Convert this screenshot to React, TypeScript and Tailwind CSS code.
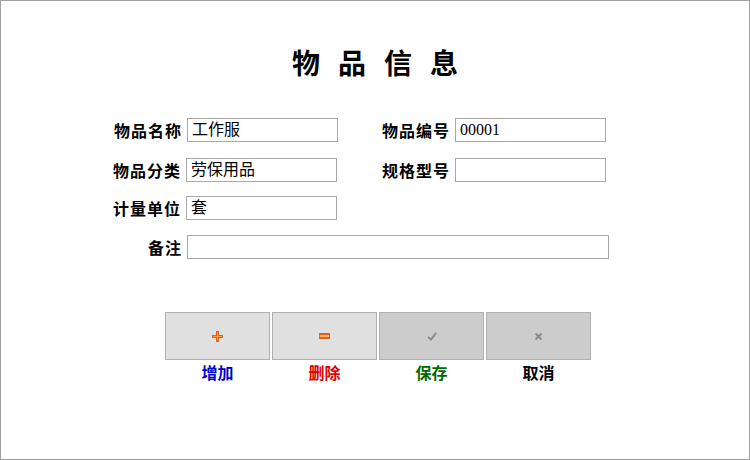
import React from "react";

const cjk = "font-['SimSun','Noto_Sans_CJK_SC',sans-serif]";

const Field = ({ label, value, labelWidth, inputWidth }: { label: string; value?: string; labelWidth: string; inputWidth: string }) => (
  <div className="flex items-center">
    <label className={`${labelWidth} text-right text-[16px] font-bold text-black pr-[5px] leading-none tracking-[1px]`}>{label}</label>
    <input
      readOnly
      value={value ?? ""}
      className={`${inputWidth} h-[24px] border border-[#a9a9a9] bg-white px-[4px] text-[16px] text-black outline-none font-['Liberation_Serif','Noto_Sans_CJK_SC',serif]`}
    />
  </div>
);

const PlusIcon = () => (
  <svg width="11" height="11" viewBox="0 0 11 11">
    <path d="M4 0h3v4h4v3H7v4H4V7H0V4h4z" fill="#e4611a" />
    <path d="M5 1h1v4h4v1H6v4H5V6H1V5h4z" fill="#f59a3c" />
  </svg>
);

const MinusIcon = () => (
  <svg width="11" height="6" viewBox="0 0 11 6">
    <rect x="0" y="0" width="11" height="6" fill="#e4611a" />
    <rect x="1" y="2" width="9" height="2" fill="#f7b66a" />
  </svg>
);

const CheckIcon = () => (
  <svg width="10" height="9" viewBox="0 0 10 9">
    <path d="M1 5l3 2.5L9 1" fill="none" stroke="#8a8a8a" strokeWidth="2" />
  </svg>
);

const CrossIcon = () => (
  <svg width="9" height="9" viewBox="0 0 9 9">
    <path d="M1.5 1.5l6 6M7.5 1.5l-6 6" fill="none" stroke="#8a8a8a" strokeWidth="2" />
  </svg>
);

const buttons = [
  { key: "add", label: "增加", color: "text-[#0000cc]", bg: "bg-[#e0e0e0]", icon: <PlusIcon /> },
  { key: "del", label: "删除", color: "text-[#e00000]", bg: "bg-[#e0e0e0]", icon: <MinusIcon /> },
  { key: "save", label: "保存", color: "text-[#006b00]", bg: "bg-[#cccccc]", icon: <CheckIcon /> },
  { key: "cancel", label: "取消", color: "text-black", bg: "bg-[#cccccc]", icon: <CrossIcon /> },
];

export default function App() {
  return (
    <div className={`w-[750px] h-[460px] bg-white border border-[#a0a0a0] ${cjk}`}>
      <h1 className="pt-[45px] text-center text-[28px] font-bold leading-[32px] text-black tracking-[18px] pl-[18px]">
        物品信息
      </h1>

      <div className="ml-[98px] mt-[40px] flex flex-col">
        <div className="flex">
          <Field label="物品名称" value="工作服" labelWidth="w-[88px]" inputWidth="w-[151px]" />
          <Field label="物品编号" value="00001" labelWidth="w-[117px]" inputWidth="w-[151px]" />
        </div>
        <div className="flex mt-[16px]">
          <Field label="物品分类" value="劳保用品" labelWidth="w-[87px]" inputWidth="w-[151px]" />
          <Field label="规格型号" labelWidth="w-[118px]" inputWidth="w-[151px]" />
        </div>
        <div className="flex mt-[14px]">
          <Field label="计量单位" value="套" labelWidth="w-[87px]" inputWidth="w-[151px]" />
        </div>
        <div className="flex mt-[15px]">
          <Field label="备注" labelWidth="w-[88px]" inputWidth="w-[422px]" />
        </div>
      </div>

      <div className="ml-[164px] mt-[53px] flex gap-[2px]">
        {buttons.map((b) => (
          <div key={b.key} className="flex flex-col items-center">
            <button className={`w-[105px] h-[48px] ${b.bg} border border-[#b0b0b0] flex items-center justify-center`}>
              {b.icon}
            </button>
            <span className={`mt-[2px] text-[16px] font-bold leading-[20px] ${b.color}`}>{b.label}</span>
          </div>
        ))}
      </div>
    </div>
  );
}
